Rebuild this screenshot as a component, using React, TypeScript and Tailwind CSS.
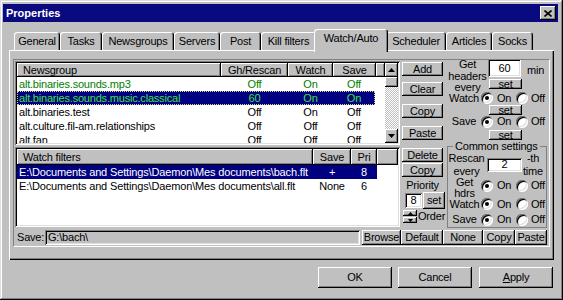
import type { ReactNode } from 'react'
import clsx from 'clsx'

const raised = 'bg-[#c0c0c0] shadow-[inset_-1px_-1px_#000,inset_1px_1px_#fff,inset_-2px_-2px_#808080]'
const sunken = 'shadow-[inset_1px_1px_#808080,inset_-1px_-1px_#fff,inset_2px_2px_#000,inset_-2px_-2px_#dfdfdf]'
const headerCell = 'flex h-full items-center bg-[#c0c0c0] shadow-[inset_-1px_-1px_#000,inset_1px_1px_#fff,inset_-2px_-2px_#808080]'

const tabs: [string, number][] = [
  ['General', 46], ['Tasks', 42], ['Newsgroups', 72], ['Servers', 46], ['Post', 41],
  ['Kill filters', 55], ['Watch/Auto', 74], ['Scheduler', 60], ['Articles', 46], ['Socks', 41],
]

type Group = { name: string; gh: string; watch: string; save: string; tone?: 'green' | 'selected' }

const groups: Group[] = [
  { name: 'alt.binaries.sounds.mp3', gh: 'Off', watch: 'On', save: 'Off', tone: 'green' },
  { name: 'alt.binaries.sounds.music.classical', gh: '60', watch: 'On', save: 'On', tone: 'selected' },
  { name: 'alt.binaries.test', gh: 'Off', watch: 'On', save: 'Off' },
  { name: 'alt.culture.fil-am.relationships', gh: 'Off', watch: 'Off', save: 'Off' },
  { name: 'alt.fan', gh: 'Off', watch: 'Off', save: 'Off' },
]

const filters = [
  { path: 'E:\\Documents and Settings\\Daemon\\Mes documents\\bach.flt', save: '+', pri: '8', selected: true },
  { path: 'E:\\Documents and Settings\\Daemon\\Mes documents\\all.flt', save: 'None', pri: '6', selected: false },
]

function Btn({ className, children }: { className?: string; children: ReactNode }) {
  return <div className={clsx('flex items-center justify-center overflow-hidden whitespace-nowrap', raised, className)}>{children}</div>
}

function SetBtn({ className }: { className?: string }) {
  return <Btn className={clsx('h-[10px] w-[33px] leading-[10px]', className)}>set</Btn>
}

function Arrow({ down }: { down?: boolean }) {
  return (
    <svg width="7" height="4" viewBox="0 0 7 4" aria-hidden="true">
      <polygon points={down ? '0,0 7,0 3.5,4' : '0,4 7,4 3.5,0'} fill="#000" />
    </svg>
  )
}

function Radio({ checked }: { checked?: boolean }) {
  return (
    <div className="flex size-[12px] shrink-0 items-center justify-center rounded-full bg-white shadow-[inset_1px_1px_#808080,inset_-1px_-1px_#fff,inset_2px_2px_#000,inset_-2px_-2px_#dfdfdf]">
      {checked ? <div className="size-[4px] rounded-full bg-black" /> : null}
    </div>
  )
}

function OnOff() {
  return (
    <>
      <Radio checked />
      <span className="ml-[4px] w-[19px]">On</span>
      <Radio />
      <span className="ml-[3px]">Off</span>
    </>
  )
}

function Scrollbar() {
  return (
    <div className="flex w-[13px] flex-col">
      <Btn className="h-[14px] shrink-0"><Arrow /></Btn>
      <div className={clsx('h-[10px] shrink-0', raised)} />
      <div className="flex-1 bg-[repeating-conic-gradient(#c0c0c0_0%_25%,#ffffff_0%_50%)] bg-[length:2px_2px]" />
      <Btn className="h-[14px] shrink-0"><Arrow down /></Btn>
    </div>
  )
}

function NewsgroupList() {
  return (
    <div className={clsx('flex h-[84px] w-[385px] bg-white p-[2px]', sunken)}>
      <div className="flex w-[368px] flex-col overflow-hidden">
        <div className="flex h-[14px] shrink-0">
          <div className={clsx(headerCell, 'w-[204px] pl-[6px]')}>Newsgroup</div>
          <div className={clsx(headerCell, 'w-[67px] justify-center')}>Gh/Rescan</div>
          <div className={clsx(headerCell, 'w-[45px] justify-center')}>Watch</div>
          <div className={clsx(headerCell, 'w-[43px] justify-center')}>Save</div>
          <div className={clsx(headerCell, 'w-[9px]')} />
        </div>
        {groups.map((g) => (
          <div
            key={g.name}
            className={clsx(
              'flex h-[14px] w-[358px] shrink-0 items-center whitespace-nowrap',
              g.tone === 'green' && 'text-[#008000]',
              g.tone === 'selected' && 'bg-[#000080] text-[#3ee03e] outline-1 -outline-offset-1 outline-[#d8d878] outline-dotted',
            )}
          >
            <span className="w-[204px] shrink-0 pl-[2px]">{g.name}</span>
            <span className="w-[67px] shrink-0 text-center">{g.gh}</span>
            <span className="w-[45px] shrink-0 text-center">{g.watch}</span>
            <span className="w-[42px] shrink-0 text-center">{g.save}</span>
          </div>
        ))}
      </div>
      <Scrollbar />
    </div>
  )
}

function FilterList() {
  return (
    <div className={clsx('mt-[2px] flex h-[80px] w-[385px] flex-col bg-white p-[2px]', sunken)}>
      <div className="flex h-[16px] shrink-0">
        <div className={clsx(headerCell, 'w-[296px] pl-[6px]')}>Watch filters</div>
        <div className={clsx(headerCell, 'w-[38px] justify-center')}>Save</div>
        <div className={clsx(headerCell, 'w-[26px] justify-center')}>Pri</div>
        <div className={clsx(headerCell, 'w-[21px]')} />
      </div>
      {filters.map((f) => (
        <div key={f.path} className={clsx('flex h-[14px] w-[360px] items-center whitespace-nowrap', f.selected && 'bg-[#000080] text-white')}>
          <span className="w-[296px] shrink-0 overflow-hidden pl-[2px] tracking-[-0.15px]">{f.path}</span>
          <span className="w-[38px] shrink-0 text-center">{f.save}</span>
          <span className="w-[26px] shrink-0 text-center">{f.pri}</span>
        </div>
      ))}
    </div>
  )
}

export default function App() {
  return (
    <div className="h-[300px] w-[563px] overflow-hidden bg-[#c0c0c0] font-['Liberation_Sans',Arial,sans-serif] text-[11px] leading-[13px] tracking-[-0.2px] text-black">
      <div className="flex h-full flex-col pt-[4px] pr-[5px] pl-[3px] shadow-[inset_-1px_-1px_#000,inset_1px_1px_#dfdfdf,inset_-2px_-2px_#808080,inset_2px_2px_#fff]">
        {/* title bar */}
        <div className="flex h-[18px] shrink-0 items-center justify-between bg-[#0a0a80] pr-[2px] pl-[3px]">
          <span className="font-bold tracking-normal text-white">Properties</span>
          <Btn className="h-[14px] w-[16px]">
            <svg width="8" height="7" viewBox="0 0 8 7" aria-hidden="true">
              <path d="M0.5 0.5 L7.5 6.5 M7.5 0.5 L0.5 6.5" stroke="#000" strokeWidth="1.6" />
            </svg>
          </Btn>
        </div>

        {/* tabs */}
        <div className="mt-[7px] ml-[11px] flex h-[21px] shrink-0 items-end">
          {tabs.map(([label, w]) =>
            label === 'Watch/Auto' ? (
              <div
                key={label}
                style={{ width: w }}
                className="relative z-10 -mx-[2px] -mb-[2px] flex h-[23px] shrink-0 justify-center rounded-t-[3px] bg-[#c0c0c0] pt-[3px] shadow-[inset_1px_1px_#fff,inset_-1px_0_#000,inset_-2px_0_#808080]"
              >
                {label}
              </div>
            ) : (
              <div
                key={label}
                style={{ width: w }}
                className="flex h-[18px] shrink-0 items-center justify-center rounded-t-[3px] shadow-[inset_1px_1px_#fff,inset_-1px_0_#000,inset_-2px_0_#808080]"
              >
                {label}
              </div>
            ),
          )}
        </div>

        {/* panel */}
        <div className="ml-[6px] h-[210px] w-[545px] shrink-0 pt-[9px] pl-[4px] shadow-[inset_1px_1px_#fff,inset_-1px_-1px_#000,inset_-2px_-2px_#808080]">
          <div className="h-[188px] w-[537px] border border-t-[#808080] border-r-white border-b-white border-l-[#808080]">
            <div className="flex h-[169px]">
              {/* lists */}
              <div className="mt-[1px] ml-[1px] w-[385px]">
                <NewsgroupList />
                <FilterList />
              </div>

              {/* buttons */}
              <div className="ml-[2px] flex w-[43px] flex-col items-start">
                <Btn className="mt-[2px] h-[14px] w-[41px]">Add</Btn>
                <Btn className="mt-[6px] h-[14px] w-[41px]">Clear</Btn>
                <Btn className="mt-[8px] h-[14px] w-[41px]">Copy</Btn>
                <Btn className="mt-[8px] h-[14px] w-[41px]">Paste</Btn>
                <Btn className="mt-[8px] h-[14px] w-[41px]">Delete</Btn>
                <Btn className="mt-[1px] h-[14px] w-[41px]">Copy</Btn>
                <div className="mt-[2px] h-[12px] w-[41px] text-center leading-[12px]">Priority</div>
                <div className="mt-[1px] flex h-[17px] items-center">
                  <div className={clsx('ml-[3px] flex h-[15px] w-[17px] items-center justify-center bg-white', sunken)}>8</div>
                  <Btn className="ml-[1px] h-[17px] w-[22px]">set</Btn>
                </div>
                <div className="mt-[1px] flex h-[13px] items-center">
                  <div className="ml-[1px] flex h-[13px] w-[14px] flex-col">
                    <Btn className="h-[6px]">
                      <svg width="5" height="3" viewBox="0 0 5 3" aria-hidden="true"><polygon points="0,3 5,3 2.5,0" fill="#000" /></svg>
                    </Btn>
                    <Btn className="mt-[1px] h-[6px]">
                      <svg width="5" height="3" viewBox="0 0 5 3" aria-hidden="true"><polygon points="0,0 5,0 2.5,3" fill="#000" /></svg>
                    </Btn>
                  </div>
                  <span className="ml-[1px]">Order</span>
                </div>
              </div>

              {/* settings */}
              <div className="-mt-[1px] ml-[2px] flex w-[100px] flex-col">
                <div className="flex h-[32px]">
                  <div className="w-[41px] shrink-0 text-center leading-[11.5px]">Get<br />headers<br />every</div>
                  <div className="flex flex-col">
                    <div className="flex">
                      <div className={clsx('flex h-[18px] w-[33px] items-center justify-center bg-white', sunken)}>60</div>
                      <span className="mt-[5px] ml-[6px]">min</span>
                    </div>
                    <SetBtn className="mt-[2px] ml-[1px]" />
                  </div>
                </div>
                <div className="flex h-[14px] items-center">
                  <div className="w-[34px] shrink-0 text-center">Watch</div>
                  <OnOff />
                </div>
                <SetBtn className="ml-[42px]" />
                <div className="flex h-[13px] items-center">
                  <div className="w-[34px] shrink-0 text-center">Save</div>
                  <OnOff />
                </div>
                <SetBtn className="mt-[2px] ml-[42px]" />

                <fieldset className="w-[100px] border border-[#808080] pb-[1px]">
                  <legend className="ml-[5px] px-[2px] leading-[12px]">Common settings</legend>
                  <div className="flex h-[25px] items-center">
                    <div className="w-[37px] shrink-0 text-center">Rescan<br />every</div>
                    <div className={clsx('ml-[2px] flex h-[14px] w-[35px] items-center justify-center bg-white', sunken)}>2</div>
                    <div className="ml-[1px] w-[20px] text-center">-th<br />time</div>
                  </div>
                  <div className="flex h-[22px] items-start">
                    <div className="w-[33px] shrink-0 text-center leading-[10.5px]">Get<br />hdrs</div>
                    <div className="mt-[2px] flex items-center">
                      <OnOff />
                    </div>
                  </div>
                  <div className="-mt-[2px] flex h-[13px] items-center leading-[10px]">
                    <div className="w-[33px] shrink-0 text-center">Watch</div>
                    <OnOff />
                  </div>
                  <div className="mt-[3px] flex h-[13px] items-center">
                    <div className="w-[33px] shrink-0 text-center">Save</div>
                    <OnOff />
                  </div>
                </fieldset>
              </div>
            </div>

            {/* save row */}
            <div className="mt-[1px] flex h-[15px] items-center">
              <span className="ml-[3px] w-[28px] shrink-0">Save:</span>
              <div className={clsx('flex h-[15px] w-[315px] items-center pl-[3px]', sunken)}>G:\bach\</div>
              <Btn className="ml-[2px] h-[15px] w-[39px]">Browse</Btn>
              <Btn className="h-[15px] w-[42px]">Default</Btn>
              <Btn className="h-[15px] w-[40px]">None</Btn>
              <Btn className="h-[15px] w-[32px]">Copy</Btn>
              <Btn className="h-[15px] w-[32px]">Paste</Btn>
            </div>
          </div>
        </div>

        {/* dialog buttons */}
        <div className="mt-[7px] flex h-[21px] shrink-0 justify-end pr-[5px]">
          <Btn className="h-[21px] w-[74px]">OK</Btn>
          <Btn className="ml-[6px] h-[21px] w-[74px]">Cancel</Btn>
          <Btn className="ml-[7px] h-[21px] w-[74px]"><span><span className="underline">A</span>pply</span></Btn>
        </div>
      </div>
    </div>
  )
}
